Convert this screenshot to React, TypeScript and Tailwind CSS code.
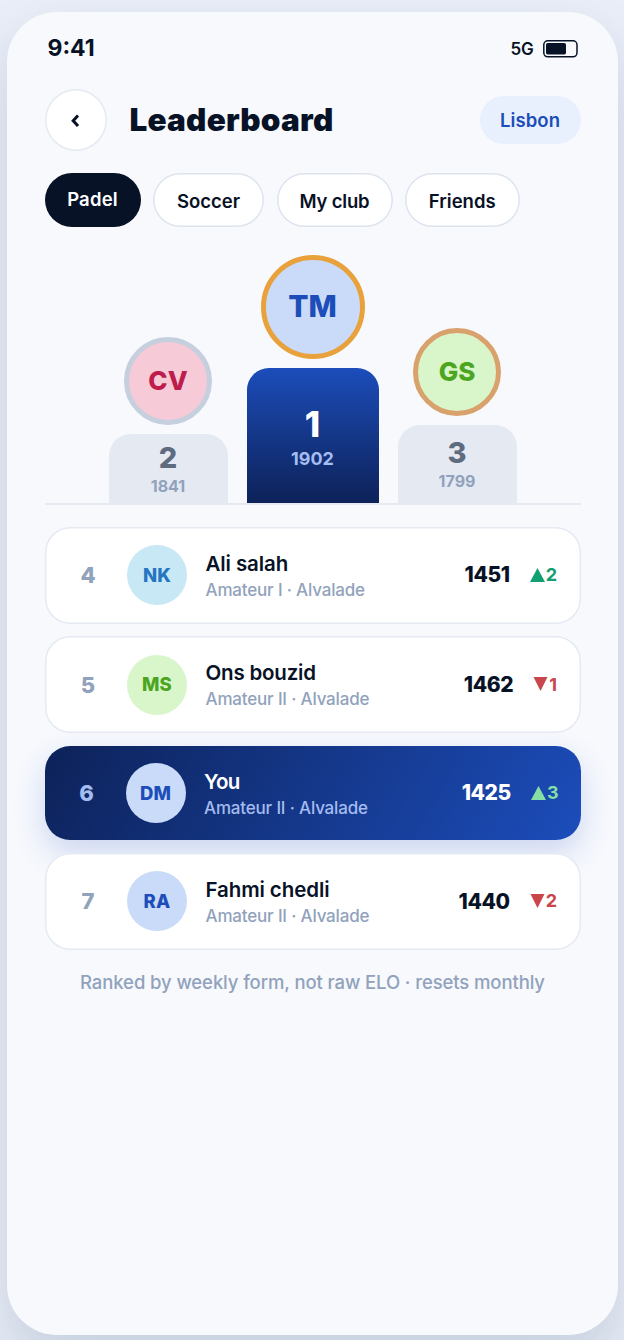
import React, { useState } from 'react';
import clsx from 'clsx';

interface Player {
  rank: number;
  initials: string;
  name: string;
  detail: string;
  score: number;
  change: number;
  avatar: string;
  nameTracking: string;
  isMe?: boolean;
}

interface PodiumPlace {
  place: number;
  initials: string;
  score: number;
  avatar: string;
  bar: string;
  placeText: string;
  scoreText: string;
}

const filters = [
  { label: 'Padel', width: 'w-[96px]', tracking: 'tracking-[0.2px]' },
  { label: 'Soccer', width: 'w-[111px]', tracking: 'tracking-[0px]' },
  { label: 'My club', width: 'w-[116px]', tracking: 'tracking-[-0.2px]' },
  { label: 'Friends', width: 'w-[114.5px]', tracking: 'tracking-[0px]' },
];

const podium: PodiumPlace[] = [
  {
    place: 2,
    initials: 'CV',
    score: 1841,
    avatar: 'h-[88px] w-[88px] border-[#c5cfde] bg-[#f6cad6] pb-[1px] text-[26px] text-[#bd1c4c]',
    bar: 'h-[69px] w-[119px] bg-[#e4e9f2] pt-[8px]',
    placeText: 'text-[29px] text-[#5f6c80]',
    scoreText: 'text-[16px] leading-[20px] mt-[2px] text-[#91a2bc]',
  },
  {
    place: 1,
    initials: 'TM',
    score: 1902,
    avatar: 'h-[104px] w-[104px] border-[#e9a23b] bg-[#c9dbf8] pb-[1px] text-[30px] text-[#1c4db8]',
    bar: 'h-[135px] w-[132px] bg-linear-to-b from-[#1c4dbb] to-[#0d2259] pt-[40px]',
    placeText: 'text-[35px] text-white',
    scoreText: 'text-[18px] leading-[22px] mt-[8px] text-[#a4bcf0]',
  },
  {
    place: 3,
    initials: 'GS',
    score: 1799,
    avatar: 'h-[88px] w-[88px] border-[#d9a26c] bg-[#d9f5ca] pb-[1px] text-[26px] text-[#4ca51f]',
    bar: 'h-[78px] w-[119px] bg-[#e4e9f2] pt-[12px]',
    placeText: 'text-[29px] text-[#5f6c80]',
    scoreText: 'text-[16px] leading-[20px] mt-[2px] text-[#91a2bc]',
  },
];

const players: Player[] = [
  { rank: 4, initials: 'NK', name: 'Ali salah', detail: 'Amateur I · Alvalade', score: 1451, change: 2, avatar: 'bg-[#c8e8f6] text-[#2675c0]', nameTracking: 'tracking-[-0.1px]' },
  { rank: 5, initials: 'MS', name: 'Ons bouzid', detail: 'Amateur II · Alvalade', score: 1462, change: -1, avatar: 'bg-[#d9f5ca] text-[#4ca51f]', nameTracking: 'tracking-[-0.2px]' },
  { rank: 6, initials: 'DM', name: 'You', detail: 'Amateur II · Alvalade', score: 1425, change: 3, avatar: 'bg-[#c9dbf8] text-[#1c4db8]', nameTracking: 'tracking-[-0.7px]', isMe: true },
  { rank: 7, initials: 'RA', name: 'Fahmi chedli', detail: 'Amateur II · Alvalade', score: 1440, change: -2, avatar: 'bg-[#c9dbf8] text-[#1c4db8]', nameTracking: 'tracking-[-0.1px]' },
];

function StatusBar() {
  return (
    <div className="flex h-[26px] items-center justify-between pr-[3px] pl-[3px]">
      <span className="text-[23px] font-bold tracking-[0px]">9:41</span>
      <div className="flex items-center gap-[9px]">
        <span className="mt-[2px] text-[17px] font-semibold tracking-[-0.2px]">5G</span>
        <svg width="35" height="18" viewBox="0 0 35 18" fill="none">
          <rect x="0.8" y="0.8" width="33.2" height="16" rx="4" stroke="#081226" strokeWidth="1.5" />
          <rect x="3" y="3" width="20" height="11.5" rx="1.8" fill="#081226" />
        </svg>
      </div>
    </div>
  );
}

function Change({ value, isMe }: { value: number; isMe?: boolean }) {
  const up = value > 0;
  return (
    <div
      className={clsx(
        'flex items-center gap-[1px] text-[18px] leading-none font-bold',
        isMe ? 'text-[#86dfa4]' : up ? 'text-[#12a072]' : 'text-[#c8464c]'
      )}
    >
      <svg className="mb-[1px]" width="15" height="14" viewBox="0 0 15 14" fill="currentColor">
        {up ? <path d="M7.5 0 15 14H0Z" /> : <path d="M0.5 0H14.5L7.5 14Z" />}
      </svg>
      <span>{Math.abs(value)}</span>
    </div>
  );
}

function PlayerRow({ player }: { player: Player }) {
  const { isMe } = player;
  return (
    <div
      className={clsx(
        'flex items-center rounded-[25px]',
        isMe
          ? 'h-[94px] bg-linear-[120deg] from-[#0d2259] to-[#1c4dbb] pr-[22px] pl-[21.5px] text-white shadow-[0_13px_32px_rgba(28,77,187,0.2)]'
          : 'relative h-[97px] bg-white pr-[23.5px] pl-[23px] shadow-[inset_0_0_0_1.5px_#e4e9f2]'
      )}
    >
      <div className={clsx('w-[41px] pt-[1px] text-center text-[22px] font-extrabold', isMe ? 'text-[#a4bcf0]' : 'text-[#91a2bc]')}>
        {player.rank}
      </div>
      <div className={clsx('ml-[18.5px] flex h-[60px] w-[60px] shrink-0 items-center justify-center rounded-full pt-[1px] text-[18.5px] font-extrabold tracking-[0.2px]', player.avatar)}>
        {player.initials}
      </div>
      <div className="ml-[18.5px] flex-1 pt-[2px]">
        <div className={clsx('text-[20.5px] leading-[27px] font-semibold', player.nameTracking)}>{player.name}</div>
        <div className={clsx('text-[17px] leading-[26px] font-medium tracking-[-0.17px]', isMe ? 'text-[#a4bcf0]' : 'text-[#91a2bc]')}>
          {player.detail}
        </div>
      </div>
      <div className="mr-[20px] text-[21px] font-extrabold tracking-[-0.4px]">{player.score}</div>
      <Change value={player.change} isMe={isMe} />
    </div>
  );
}

export default function App() {
  const [activeFilter, setActiveFilter] = useState('Padel');

  return (
    <div className="h-[1340px] w-[624px] overflow-hidden bg-[#e9eef8] pt-[11.5px] pl-[7px] font-['Inter',sans-serif] text-[#081226]">
      <div className="h-[1323px] w-[611px] rounded-[50px] bg-[#f7f9fd] pt-[24px] pr-[37.5px] pl-[37.5px] shadow-[0_30px_60px_rgba(20,50,90,0.16)]">
        <StatusBar />

        {/* Header */}
        <div className="mt-[27px] flex h-[62px] items-center">
          <button className="flex h-[62px] w-[62px] items-center justify-center rounded-full bg-white shadow-[inset_0_0_0_1.5px_#e4e9f2]">
            <svg width="11" height="14" viewBox="0 0 11 14" fill="none" stroke="#081226" strokeWidth="3">
              <path d="M8 2.6 3.2 7.8 8 13" />
            </svg>
          </button>
          <h1 className="ml-[23px] flex-1 text-[31.5px] font-black tracking-[0.2px]">Leaderboard</h1>
          <div className="flex h-[48px] w-[101px] items-center justify-center rounded-full bg-[#e8f0fe] pt-[3px] text-[18.5px] font-semibold tracking-[0.1px] text-[#1c4db8]">
            Lisbon
          </div>
        </div>

        {/* Filters */}
        <div className="mt-[22.5px] flex gap-[12.5px]">
          {filters.map((filter) => (
            <button
              key={filter.label}
              onClick={() => setActiveFilter(filter.label)}
              className={clsx(
                'flex h-[54px] items-center justify-center rounded-full text-[18.5px] font-semibold',
                filter.width,
                filter.tracking,
                activeFilter === filter.label
                  ? 'bg-[#081226] pb-[1px] text-white'
                  : 'bg-white pt-[3px] shadow-[inset_0_0_0_1.5px_#dce4ef]'
              )}
            >
              {filter.label}
            </button>
          ))}
        </div>

        {/* Podium */}
        <div className="mt-[28px] flex h-[250px] items-end justify-center gap-[19px] border-b-2 border-[#e4e9f2]">
          {podium.map((p) => (
            <div key={p.place} className="flex flex-col items-center gap-[9.5px]">
              <div className={clsx('flex items-center justify-center rounded-full border-[5px] font-extrabold', p.avatar)}>
                {p.initials}
              </div>
              <div className={clsx('flex flex-col items-center rounded-t-[22px]', p.bar)}>
                <span className={clsx('leading-[32px] font-extrabold', p.placeText)}>{p.place}</span>
                <span className={clsx('font-bold', p.scoreText)}>{p.score}</span>
              </div>
            </div>
          ))}
        </div>

        {/* Ranking list */}
        <div className="mt-[21.5px] flex flex-col gap-[12.8px]">
          {players.map((player) => (
            <PlayerRow key={player.rank} player={player} />
          ))}
        </div>

        <p className="mt-[18px] text-center text-[18.5px] leading-[28px] font-medium tracking-[-0.1px] whitespace-nowrap text-[#91a2bc]">
          Ranked by weekly form, not raw ELO · resets monthly
        </p>
      </div>
    </div>
  );
}
